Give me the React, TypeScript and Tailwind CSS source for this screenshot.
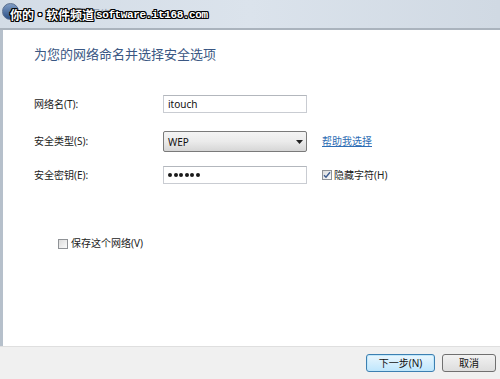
import React from 'react';

// Win7 "connect to a network manually" wizard page
const font = "font-['Segoe_UI','Noto_Sans','Noto_Sans_CJK_SC',sans-serif]";

const TextBox: React.FC<{ value: string; password?: boolean }> = ({ value, password }) => (
    <div className="w-[144px] h-[18px] border border-[#c9ccd2] border-t-[#b3b7bd] bg-white flex items-center pl-[4px]">
        {password ? (
            <div className="flex items-center gap-[1.5px]">
                {[0, 1, 2, 3, 4, 5].map((i) => (
                    <span key={i} className="w-[4px] h-[4px] rounded-full bg-[#1a1a1a]" />
                ))}
            </div>
        ) : (
            <span className="text-[10px] leading-none text-[#111]">{value}</span>
        )}
    </div>
);

const Check: React.FC<{ checked?: boolean }> = ({ checked }) => (
    <div className="w-[10px] h-[10px] border border-[#8f9296] bg-gradient-to-br from-[#dcdcdc] to-[#fafafa] flex items-center justify-center">
        {checked && (
            <svg width="8" height="8" viewBox="0 0 8 8">
                <path d="M1 4.2 L3 6.3 L7 1.2" stroke="#3d5c8f" strokeWidth="1.4" fill="none" />
            </svg>
        )}
    </div>
);

export default function App() {
    return (
        <div className={`w-[500px] h-[379px] flex flex-col bg-white overflow-hidden ${font}`}>
            {/* title bar */}
            <div className="relative h-[30px] shrink-0 bg-gradient-to-r from-[#d3dce6] via-[#dbe3ec] to-[#d0d9e3] border-b-[2px] border-[#aab3bd] flex items-center">
                <div className="absolute left-[2px] top-[3px] w-[17px] h-[17px] rounded-full bg-gradient-to-b from-[#7f9cc4] to-[#2a4f86] border border-[#5a6f8f]" />
                <span className="absolute left-[90px] top-[7px] text-[10px] text-[#8a97a8]">网络</span>
                <div className="relative ml-[10px] mt-[2px] flex items-center [text-shadow:1px_0_0_#000,-1px_0_0_#000,0_1px_0_#000,0_-1px_0_#000,1px_1px_0_#000,-1px_-1px_0_#000,1px_-1px_0_#000,-1px_1px_0_#000] text-white">
                    <span className="text-[12px] font-bold leading-none font-['Noto_Sans_CJK_SC',sans-serif]">你的·软件频道</span>
                    <span className="ml-[2px] text-[11px] font-bold leading-none font-['Liberation_Mono',monospace] tracking-[-0.4px]">software.it168.com</span>
                </div>
            </div>

            {/* body */}
            <div className="flex-1 border-l-[3px] border-[#b6c0cb] pl-[31px] pt-[15px] flex flex-col">
                <div className="text-[13px] leading-[18px] text-[#3a5783]">为您的网络命名并选择安全选项</div>

                <div className="mt-[32px] flex items-center h-[18px]">
                    <div className="w-[129px] text-[10px] text-[#222]">网络名(T):</div>
                    <TextBox value="itouch" />
                </div>

                <div className="mt-[18px] flex items-center h-[21px]">
                    <div className="w-[129px] text-[10px] text-[#222]">安全类型(S):</div>
                    <div className="w-[144px] h-[21px] border border-[#7a7a7a] rounded-[2px] bg-gradient-to-b from-[#f4f4f4] via-[#ebebeb] to-[#d6d6d6] flex items-center justify-between pl-[4px] pr-[3px]">
                        <span className="text-[10px] leading-none text-[#111]">WEP</span>
                        <svg width="7" height="4" viewBox="0 0 7 4">
                            <path d="M0 0 H7 L3.5 4 Z" fill="#222" />
                        </svg>
                    </div>
                    <span className="ml-[15px] text-[10px] text-[#2e6db4] underline">帮助我选择</span>
                </div>

                <div className="mt-[14px] flex items-center h-[18px]">
                    <div className="w-[129px] text-[10px] text-[#222]">安全密钥(E):</div>
                    <TextBox value="" password />
                    <div className="ml-[15px] flex items-center gap-[2px]">
                        <Check checked />
                        <span className="text-[10px] text-[#222]">隐藏字符(H)</span>
                    </div>
                </div>

                <div className="mt-[52px] ml-[24px] flex items-center gap-[3px]">
                    <Check />
                    <span className="text-[10px] text-[#222]">保存这个网络(V)</span>
                </div>
            </div>

            {/* footer */}
            <div className="h-[33px] shrink-0 border-t border-[#dfdfdf] bg-[#f0f0f0] flex justify-end items-start pt-[7px] pr-[4px] gap-[7px]">
                <div className="w-[69px] h-[18px] rounded-[3px] border border-[#3c7fb1] bg-gradient-to-b from-[#eaf6fd] to-[#bee6fd] shadow-[inset_0_0_0_1px_#bfe7fb] flex items-center justify-center text-[10px] text-[#111]">
                    下一步(N)
                </div>
                <div className="w-[54px] h-[18px] rounded-[3px] border border-[#707070] bg-gradient-to-b from-[#f2f2f2] to-[#dddddd] flex items-center justify-center text-[10px] text-[#111]">
                    取消
                </div>
            </div>
        </div>
    );
}
